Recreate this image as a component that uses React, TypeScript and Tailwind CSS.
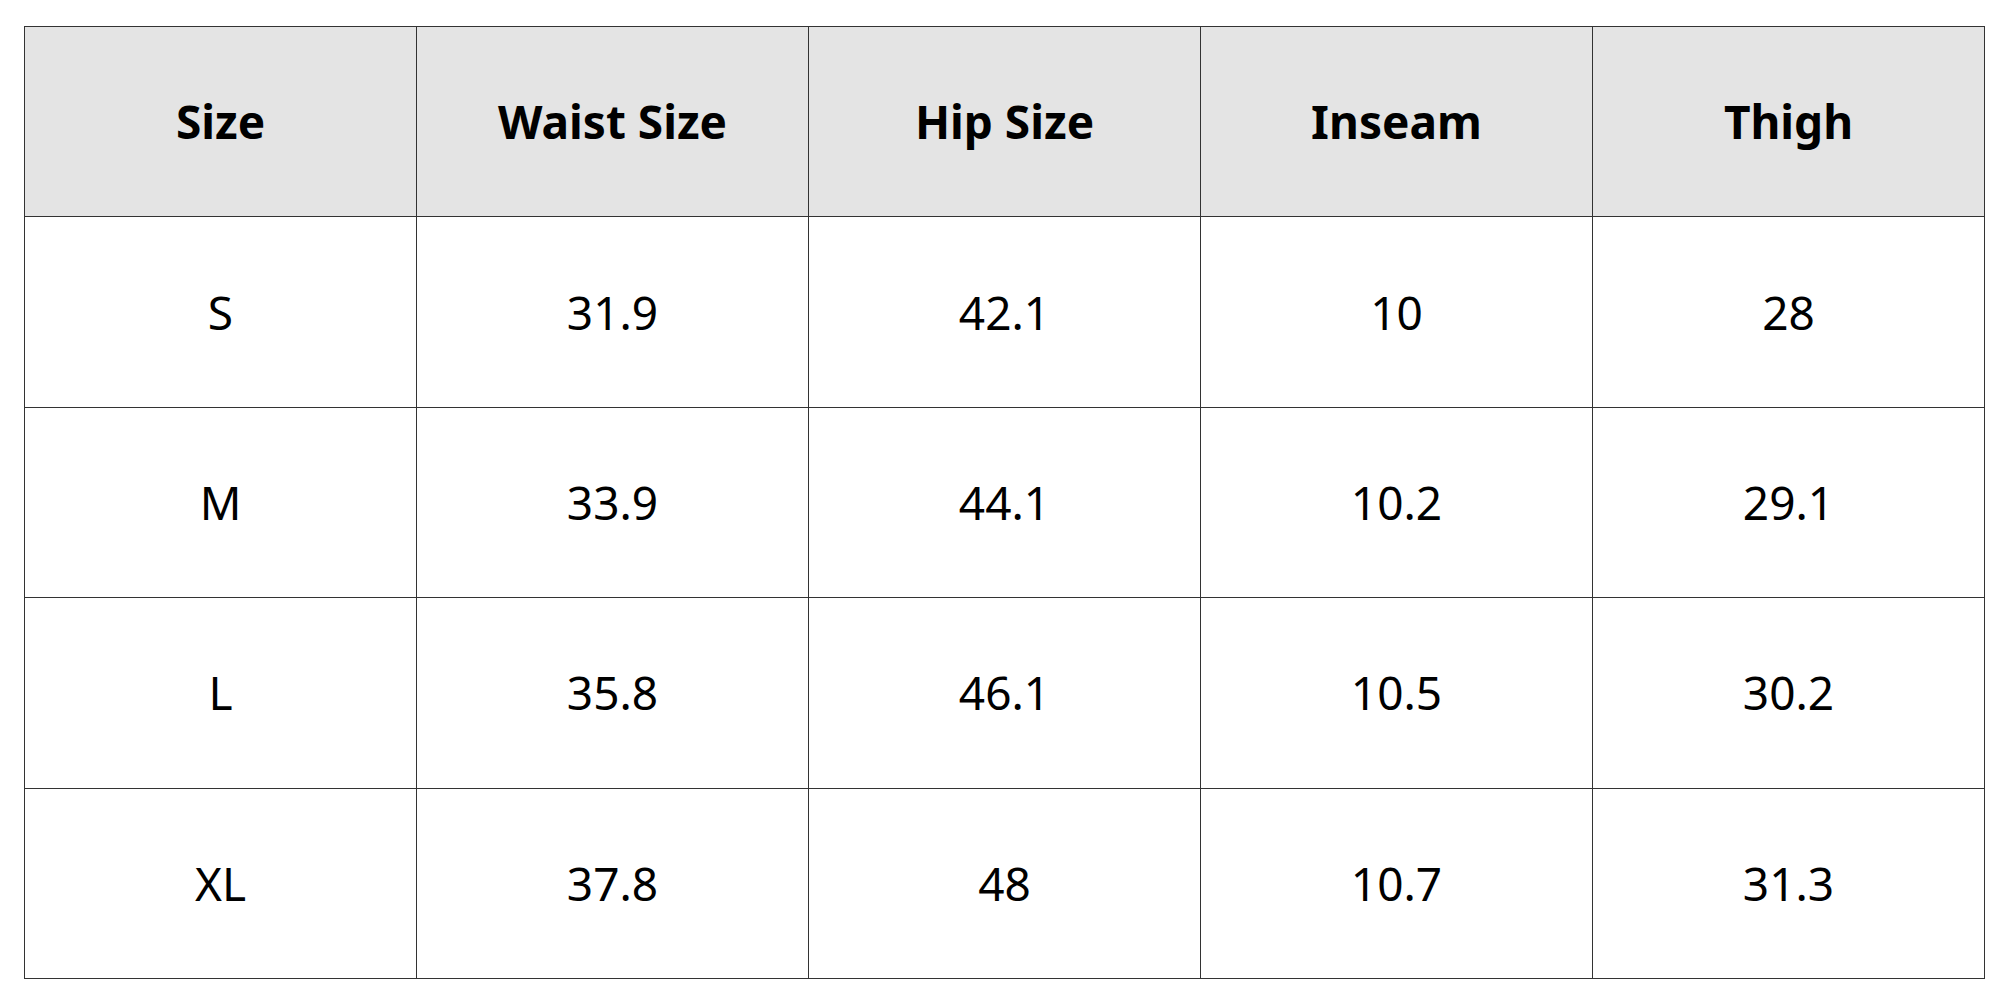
import React from "react";

const headers = ["Size", "Waist Size", "Hip Size", "Inseam", "Thigh"];
const rows = [
  ["S", "31.9", "42.1", "10", "28"],
  ["M", "33.9", "44.1", "10.2", "29.1"],
  ["L", "35.8", "46.1", "10.5", "30.2"],
  ["XL", "37.8", "48", "10.7", "31.3"],
];

export default function App() {
  return (
    <div className="w-[2000px] h-[1000px] bg-white pl-[24px] pt-[26px]" style={{ fontFamily: '"Noto Sans", "Open Sans", sans-serif' }}>
      <div className="grid grid-cols-5 w-[1961px] border-l border-t border-[#333333]">
        {headers.map((h) => (
          <div key={h} className="h-[190.4px] bg-[#e4e4e4] border-r border-b border-[#333333] flex items-center justify-center text-[46px] font-bold text-black">
            {h}
          </div>
        ))}
        {rows.map((r, i) =>
          r.map((c, j) => (
            <div key={i + "-" + j} className="h-[190.4px] bg-white border-r border-b border-[#333333] flex items-center justify-center text-[46px] text-black">
              {c}
            </div>
          ))
        )}
      </div>
    </div>
  );
}
